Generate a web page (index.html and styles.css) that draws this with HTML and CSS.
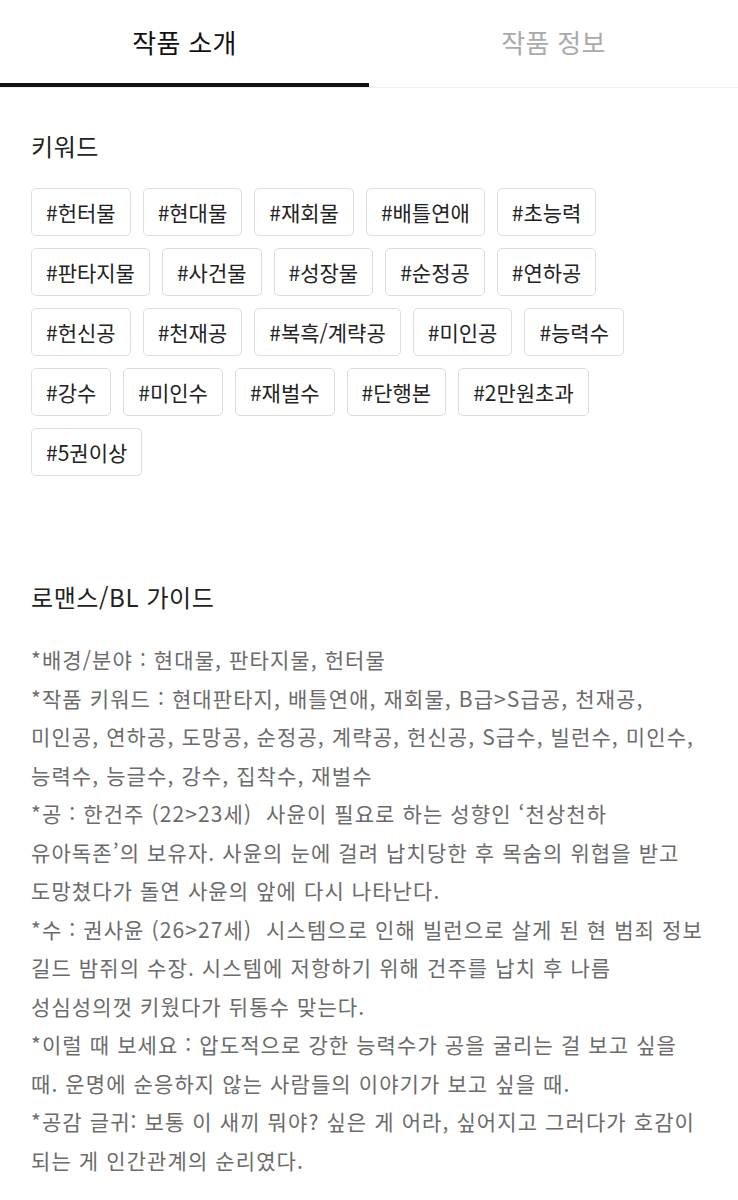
FILE: index.html
```html
<!DOCTYPE html>
<html lang="ko">
<head>
  <meta charset="UTF-8" />
  <meta name="viewport" content="width=device-width, initial-scale=1.0" />
  <title>작품 소개</title>
  <link rel="stylesheet" href="styles.css">
</head>
<body>
  <div class="tabs">
    <div class="tab active">작품 소개</div>
    <div class="tab">작품 정보</div>
  </div>
  <div class="section">
    <h2 class="section-title">키워드</h2>
    <div class="tag-list">
      <span class="tag">#헌터물</span>
      <span class="tag">#현대물</span>
      <span class="tag">#재회물</span>
      <span class="tag">#배틀연애</span>
      <span class="tag">#초능력</span>
      <span class="tag">#판타지물</span>
      <span class="tag">#사건물</span>
      <span class="tag">#성장물</span>
      <span class="tag">#순정공</span>
      <span class="tag">#연하공</span>
      <span class="tag">#헌신공</span>
      <span class="tag">#천재공</span>
      <span class="tag">#복흑/계략공</span>
      <span class="tag">#미인공</span>
      <span class="tag">#능력수</span>
      <span class="tag">#강수</span>
      <span class="tag">#미인수</span>
      <span class="tag">#재벌수</span>
      <span class="tag">#단행본</span>
      <span class="tag">#2만원초과</span>
      <span class="tag">#5권이상</span>
    </div>
  </div>
  <div class="section guide">
    <h2 class="section-title">로맨스/BL 가이드</h2>
    <p class="guide-text">
      *배경/분야 : 현대물, 판타지물, 헌터물<br>
      *작품 키워드 : 현대판타지, 배틀연애, 재회물, B급&gt;S급공, 천재공,<br>
      미인공, 연하공, 도망공, 순정공, 계략공, 헌신공, S급수, 빌런수, 미인수,<br>
      능력수, 능글수, 강수, 집착수, 재벌수<br>
      *공 : 한건주 (22&gt;23세)&nbsp; 사윤이 필요로 하는 성향인 ‘천상천하<br>
      유아독존’의 보유자. 사윤의 눈에 걸려 납치당한 후 목숨의 위협을 받고<br>
      도망쳤다가 돌연 사윤의 앞에 다시 나타난다.<br>
      *수 : 권사윤 (26&gt;27세)&nbsp; 시스템으로 인해 빌런으로 살게 된 현 범죄 정보<br>
      길드 밤쥐의 수장. 시스템에 저항하기 위해 건주를 납치 후 나름<br>
      성심성의껏 키웠다가 뒤통수 맞는다.<br>
      *이럴 때 보세요 : 압도적으로 강한 능력수가 공을 굴리는 걸 보고 싶을<br>
      때. 운명에 순응하지 않는 사람들의 이야기가 보고 싶을 때.<br>
      *공감 글귀: 보통 이 새끼 뭐야? 싶은 게 어라, 싶어지고 그러다가 호감이<br>
      되는 게 인간관계의 순리였다.
    </p>
  </div>
</body>
</html>
```

FILE: styles.css
```css
body {
  margin: 0;
  background: #fff;
  color: #222;
  font-family: "Noto Sans CJK KR", "Noto Sans", sans-serif;
}
.tabs {
  display: flex;
  border-bottom: 1px solid #eee;
}
.tab {
  flex: 1;
  text-align: center;
  font-size: 26px;
  letter-spacing: 0.3px;
  line-height: 32px;
  padding: 26px 0 29px;
  color: #aaa;
}
.tab.active {
  color: #111;
  box-shadow: inset 0 -4px 0 #111;
}
.section {
  padding: 0 31px;
}
.section-title {
  margin: 0;
  padding-top: 40px;
  font-size: 24px;
  letter-spacing: 0.6px;
  font-weight: normal;
  line-height: 36px;
  color: #222;
}
.tag-list {
  display: flex;
  flex-wrap: wrap;
  gap: 12px;
  margin-top: 24px;
}
.tag {
  display: inline-block;
  height: 48px;
  line-height: 46px;
  padding: 0 14px;
  box-sizing: border-box;
  border: 1px solid #ddd;
  border-radius: 5px;
  font-size: 21px;
  color: #222;
}
.guide {
  padding-top: 71px;
}
.guide .section-title {
  padding-top: 32px;
}
.guide-text {
  margin: 25px 0 0;
  font-size: 21px;
  letter-spacing: 1.1px;
  line-height: 38.5px;
  color: #6b6b6b;
}
```
